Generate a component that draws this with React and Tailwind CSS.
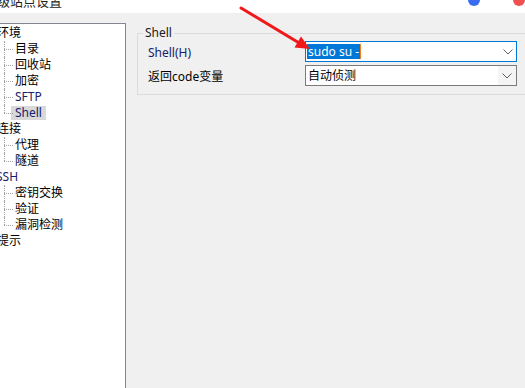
const tree = [
  { label: "环境", children: ["目录", "回收站", "加密", "SFTP", "Shell"] },
  { label: "连接", children: ["代理", "隧道"] },
  { label: "SSH", children: ["密钥交换", "验证", "漏洞检测"] },
  { label: "提示", children: [] },
];

const isLatin = (s) => /^[A-Za-z]+$/.test(s);

function Chevron() {
  return (
    <svg width="10" height="6" viewBox="0 0 10 6">
      <polyline points="0.5,0.5 5,5 9.5,0.5" fill="none" stroke="#606060" strokeWidth="1" />
    </svg>
  );
}

function ChildRow({ label, last, selected }) {
  return (
    <div className="flex h-[16px] items-center">
      <span className="relative ml-[4px] h-full w-[9px] shrink-0">
        <span
          className={`absolute left-0 top-0 border-l border-dotted border-[#a0a0a0] ${
            last ? "h-1/2" : "h-full"
          }`}
        />
        <span className="absolute left-0 top-1/2 w-full border-t border-dotted border-[#a0a0a0]" />
      </span>
      <span
        className={`leading-[14px] ${
          selected ? "-ml-[2px] bg-[#d9d9d9] px-[4px]" : "px-[2px]"
        } ${isLatin(label) ? "text-[#16206a]" : "text-black"}`}
      >
        {label}
      </span>
    </div>
  );
}

export default function App() {
  return (
    <div className="relative h-[388px] w-[525px] overflow-hidden bg-[#f0f0f0] font-['Noto_Sans','Noto_Sans_CJK_SC',sans-serif] text-[12px] text-black">
      {/* title bar, mostly cut off */}
      <div className="flex h-[13px] overflow-hidden bg-white">
        <span className="-ml-[3px] -mt-[5px] text-[13px] leading-[13px] text-[#222]">级站点设置</span>
        <span className="-mt-[6px] ml-auto h-[12px] w-[12px] rounded-full bg-[#3a6cf0]" />
        <span className="-mt-[6px] ml-[33px] h-[12px] w-[12px] rounded-full bg-[#f05050]" />
      </div>

      <div className="flex h-[375px] pt-[10px]">
        {/* tree */}
        <div className="w-[126px] shrink-0 border-r border-t border-[#828790] bg-white pt-[1px]">
          {tree.map((node) => (
            <div key={node.label}>
              <div className="flex h-[16px] items-center">
                <span
                  className={`leading-[14px] ${
                    isLatin(node.label) ? "-ml-[4px] text-[#16206a]" : "-ml-[3px]"
                  }`}
                >
                  {node.label}
                </span>
              </div>
              {node.children.map((c, i) => (
                <ChildRow
                  key={c}
                  label={c}
                  last={i === node.children.length - 1}
                  selected={c === "Shell"}
                />
              ))}
            </div>
          ))}
        </div>

        {/* settings */}
        <div className="flex-1 pl-[11px] pt-[3px]">
          <fieldset className="border border-r-0 border-[#dcdcdc] pb-[8px] pl-[10px] pt-[1px]">
            <legend className="-ml-[5px] px-[2px] leading-[14px] text-[#1a1a1a]">Shell</legend>
            <div className="grid grid-cols-[157px_212px] items-center gap-y-[3px]">
              <span className="pt-[2px] text-[#16206a]">Shell(H)</span>
              <div className="flex h-[21px] items-center border border-[#0078d7] bg-white pl-[1px]">
                <span className="bg-[#0078d7] px-[1px] leading-[15px] text-white">sudo su -</span>
                <span className="h-[15px] w-[1px] bg-[#f08020]" />
                <span className="ml-auto flex h-full w-[17px] items-center justify-center">
                  <Chevron />
                </span>
              </div>

              <span className="pt-[2px]">返回code变量</span>
              <div className="flex h-[21px] items-center border border-[#7a7a7a] bg-white pl-[2px]">
                <span className="leading-[15px]">自动侦测</span>
                <span className="ml-auto flex h-full w-[18px] items-center justify-center bg-[#f4f4f4]">
                  <Chevron />
                </span>
              </div>
            </div>
          </fieldset>
        </div>
      </div>

      {/* red annotation arrow */}
      <svg className="pointer-events-none absolute left-0 top-0" width="525" height="388">
        <line x1="241" y1="8" x2="300" y2="43.5" stroke="#f01818" strokeWidth="3" strokeLinecap="round" />
        <polygon points="310,49 294.5,47.5 301,36.5" fill="#f01818" />
      </svg>
    </div>
  );
}
